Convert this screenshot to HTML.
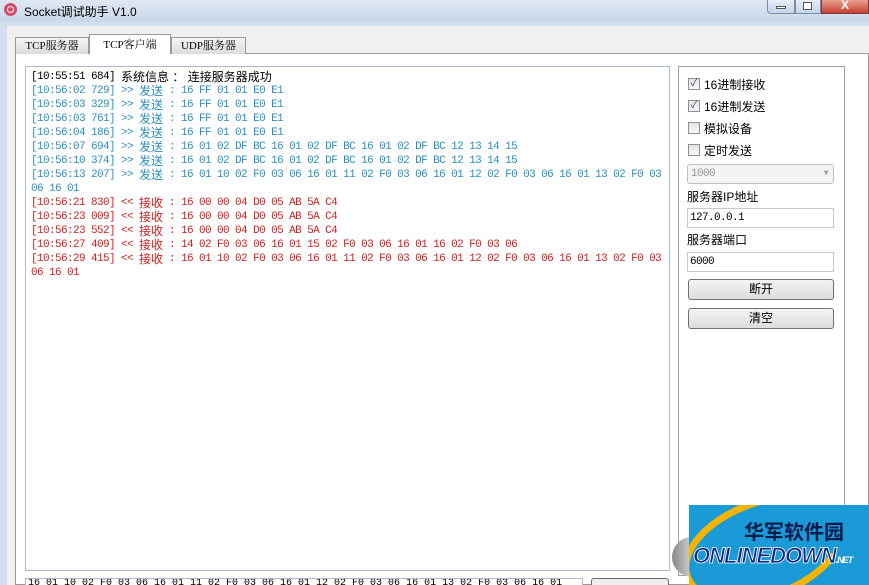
<!DOCTYPE html>
<html><head><meta charset="utf-8"><style>
*{margin:0;padding:0;box-sizing:border-box}
html,body{width:869px;height:585px;overflow:hidden}
body{background:#f0f0f0;position:relative;font-family:"Liberation Sans","Noto Sans CJK SC",sans-serif;font-size:12px}
.abs{position:absolute}
#title{left:0;top:0;width:869px;height:22px;background:linear-gradient(#dfe8f3,#c9d8ea);}
#frame{left:0;top:22px;width:869px;height:563px;background:#d3dfee}
#inner{left:7px;top:26px;width:862px;height:559px;background:#f0f0f0}
.tab{top:37px;height:17px;border:1px solid #9a9a9a;border-bottom:none;background:linear-gradient(#f4f4f4,#dcdcdc);font-size:11px;text-align:center;line-height:16px;font-family:"Liberation Serif","Noto Serif CJK SC",serif}
#panel{left:15px;top:53px;width:854px;height:532px;background:#fff;border:1px solid #9a9a9a}
#log{left:25px;top:66px;width:645px;height:505px;border:1px solid #a9bccf;background:#fff;padding:3px 0 0 5px;overflow:hidden}
.l{display:block;height:14px;line-height:14px;white-space:nowrap;overflow:hidden;font-family:"Liberation Mono","Noto Sans CJK SC",monospace;font-size:11px;letter-spacing:-0.6px}
.l b{font-weight:normal;font-family:"Liberation Sans","Noto Sans CJK SC",sans-serif;font-size:12px;letter-spacing:0;line-height:14px;vertical-align:top}
.s{color:#2a8fbf}.r{color:#d02020}.k{color:#000}
#grp{left:678px;top:66px;width:167px;height:510px;border:1px solid #a0a0a0}
.cb{left:688px;width:12px;height:12px;border:1px solid #8f8f8f;background:linear-gradient(#e4e4e4,#f8f8f8)}
.lab{font-size:12px;color:#000}
.inp{left:687px;width:147px;height:20px;border:1px solid #c8c8c8;background:#fff;font-family:"Liberation Mono",monospace;font-size:11px;letter-spacing:-0.6px;line-height:18px;padding-left:2px}
.btn{left:688px;width:146px;height:21px;border:1px solid #707070;border-radius:3px;background:linear-gradient(#f4f4f4,#dcdcdc);text-align:center;line-height:19px;font-size:12px}
</style></head><body>
<div class="abs" id="frame"></div>
<div class="abs" id="title"></div>
<div class="abs" style="left:4px;top:3px;width:13px;height:13px;border-radius:50%;background:#d84a6a"></div>
<div class="abs" style="left:7px;top:6px;width:7px;height:7px;border-radius:50%;border:1.5px solid #fff"></div>
<div class="abs" style="left:24px;top:3px;font-size:12px">Socket调试助手 V1.0</div>
<div class="abs" style="left:767px;top:0;width:28px;height:14px;border:1px solid #7a8ba3;border-top:none;border-radius:0 0 0 4px;background:linear-gradient(#e6eef8,#c4d4e8)"></div>
<div class="abs" style="left:776px;top:6px;width:10px;height:3px;background:#fff;border:1px solid #555"></div>
<div class="abs" style="left:795px;top:0;width:26px;height:14px;border:1px solid #7a8ba3;border-top:none;background:linear-gradient(#e6eef8,#c4d4e8)"></div>
<div class="abs" style="left:803px;top:2px;width:9px;height:8px;border:1px solid #555;background:#fff"></div>
<div class="abs" style="left:821px;top:0;width:48px;height:14px;border:1px solid #7a3a3a;border-top:none;background:linear-gradient(#e8a090,#c84030);color:#fff;text-align:center;font-size:12px;line-height:11px;font-weight:bold">X</div>
<div class="abs" id="inner"></div>
<div class="abs" id="panel"></div>
<div class="abs tab" style="left:15px;width:74px">TCP服务器</div>
<div class="abs tab" style="left:89px;width:82px;top:34px;height:20px;background:#fff;line-height:20px">TCP客户端</div>
<div class="abs tab" style="left:171px;width:75px">UDP服务器</div>
<div class="abs" id="log">
<div class="l k">[10:55:51 684] <b>系统信息 ： 连接服务器成功</b></div>
<div class="l s">[10:56:02 729] &gt;&gt; <b>发送</b> : 16 FF 01 01 E0 E1</div>
<div class="l s">[10:56:03 329] &gt;&gt; <b>发送</b> : 16 FF 01 01 E0 E1</div>
<div class="l s">[10:56:03 761] &gt;&gt; <b>发送</b> : 16 FF 01 01 E0 E1</div>
<div class="l s">[10:56:04 186] &gt;&gt; <b>发送</b> : 16 FF 01 01 E0 E1</div>
<div class="l s">[10:56:07 694] &gt;&gt; <b>发送</b> : 16 01 02 DF BC 16 01 02 DF BC 16 01 02 DF BC 12 13 14 15</div>
<div class="l s">[10:56:10 374] &gt;&gt; <b>发送</b> : 16 01 02 DF BC 16 01 02 DF BC 16 01 02 DF BC 12 13 14 15</div>
<div class="l s">[10:56:13 207] &gt;&gt; <b>发送</b> : 16 01 10 02 F0 03 06 16 01 11 02 F0 03 06 16 01 12 02 F0 03 06 16 01 13 02 F0 03</div>
<div class="l s">06 16 01</div>
<div class="l r">[10:56:21 830] &lt;&lt; <b>接收</b> : 16 00 00 04 D0 05 AB 5A C4</div>
<div class="l r">[10:56:23 009] &lt;&lt; <b>接收</b> : 16 00 00 04 D0 05 AB 5A C4</div>
<div class="l r">[10:56:23 552] &lt;&lt; <b>接收</b> : 16 00 00 04 D0 05 AB 5A C4</div>
<div class="l r">[10:56:27 409] &lt;&lt; <b>接收</b> : 14 02 F0 03 06 16 01 15 02 F0 03 06 16 01 16 02 F0 03 06</div>
<div class="l r">[10:56:29 415] &lt;&lt; <b>接收</b> : 16 01 10 02 F0 03 06 16 01 11 02 F0 03 06 16 01 12 02 F0 03 06 16 01 13 02 F0 03</div>
<div class="l r">06 16 01</div>
</div>
<div class="abs" id="grp"></div>
<div class="abs cb" style="top:78px;color:#2a4a8a;font-size:10px;line-height:10px;text-align:center">✓</div>
<div class="abs lab" style="left:704px;top:76px">16进制接收</div>
<div class="abs cb" style="top:100px;color:#2a4a8a;font-size:10px;line-height:10px;text-align:center">✓</div>
<div class="abs lab" style="left:704px;top:98px">16进制发送</div>
<div class="abs cb" style="top:122px"></div>
<div class="abs lab" style="left:704px;top:120px">模拟设备</div>
<div class="abs cb" style="top:144px"></div>
<div class="abs lab" style="left:704px;top:142px">定时发送</div>
<div class="abs" style="left:687px;top:164px;width:147px;height:20px;border:1px solid #c0c0c0;border-radius:3px;background:#f4f4f4;color:#999;font-size:11px;letter-spacing:-0.6px;font-family:'Liberation Mono',monospace;line-height:18px;padding-left:3px">1000<span style="position:absolute;right:5px;top:0;font-size:8px">▼</span></div>
<div class="abs lab" style="left:687px;top:188px;font-size:12px">服务器IP地址</div>
<div class="abs inp" style="top:208px">127.0.0.1</div>
<div class="abs lab" style="left:687px;top:231px">服务器端口</div>
<div class="abs inp" style="top:252px">6000</div>
<div class="abs btn" style="top:279px">断开</div>
<div class="abs btn" style="top:308px">清空</div>
<div class="abs" style="left:25px;top:578px;width:558px;height:7px;border:1px solid #a9bccf;border-bottom:none;background:#fff;font-size:10px;line-height:10px;overflow:hidden;font-family:'Liberation Mono',monospace;padding-left:2px">16 01 10 02 F0 03 06 16 01 11 02 F0 03 06 16 01 12 02 F0 03 06 16 01 13 02 F0 03 06 16 01</div>
<div class="abs" style="left:591px;top:578px;width:78px;height:7px;border:1px solid #707070;border-bottom:none;border-radius:3px 3px 0 0;background:#eee"></div>
<div class="abs" style="left:672px;top:537px;width:28px;height:40px;border-radius:20px 0 0 20px;background:linear-gradient(90deg,#888,#eee)"></div>
<div class="abs" style="left:689px;top:505px;width:180px;height:80px;background:#1a9ad6;overflow:hidden">
<div class="abs" style="left:-10px;top:-6px;width:170px;height:100px;border:7px solid #f4b400;border-radius:50%;border-right-color:transparent;transform:rotate(-20deg)"></div>
<div class="abs" style="left:55px;top:15px;font-size:20px;font-weight:bold;color:#0a1a4a;font-family:'Noto Sans CJK SC',sans-serif;line-height:22px">华军软件园</div>
<div class="abs" style="left:4px;top:38px;font-size:22px;font-weight:bold;font-style:italic;color:#0b2a8a;letter-spacing:-1px;-webkit-text-stroke:0.8px #fff">ONLINEDOWN<span style="font-size:9px;-webkit-text-stroke:0;color:#fff">.NET</span></div>
</div>
</body></html>
